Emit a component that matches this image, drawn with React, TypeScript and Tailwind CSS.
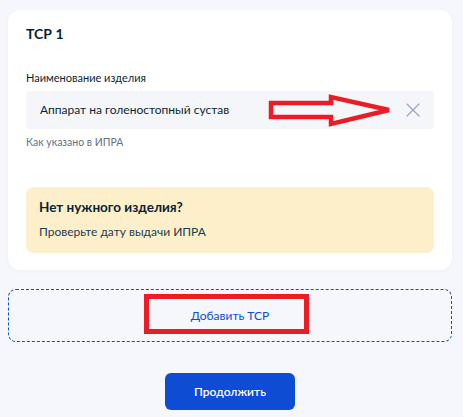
import React from "react";

const FONT = { fontFamily: "Lato, 'Noto Sans', sans-serif" };

function CloseIcon() {
  return (
    <svg width="14" height="14" viewBox="0 0 14 14" fill="none" stroke="#9aa6c6" strokeWidth={1.3} strokeLinecap="round">
      <path d="M1 1l12 12M13 1L1 13" />
    </svg>
  );
}

export default function App() {
  return (
    <div className="relative min-h-screen bg-[#f5f7fc] pl-2 pr-[11px] pt-[10px] pb-4 text-[#0b1f33]" style={FONT}>
      {/* card */}
      <div className="rounded-xl bg-white px-[18px] pt-[12px] pb-[17px] shadow-[0_1px_4px_rgba(11,31,51,0.04)]">
        <h2 className="text-sm leading-6 font-bold">ТСР 1</h2>

        <label className="mt-[22px] block text-[11px] leading-5 text-[#0b1f33]">Наименование изделия</label>
        <div className="mt-[3px] flex h-[38px] items-center justify-between rounded bg-[#f4f6fa] pl-[14px] pr-[14px]">
          <span className="text-xs leading-5">Аппарат на голеностопный сустав</span>
          <CloseIcon />
        </div>
        <p className="mt-[5px] text-[10.5px] leading-4 text-[#66727f]">Как указано в ИПРА</p>

        <div className="mt-[37px] rounded-lg bg-[#fdefc9] px-[13px] pt-[8px] pb-[11px]">
          <h3 className="text-[13.5px] leading-6 font-bold">Нет нужного изделия?</h3>
          <p className="mt-[3px] text-xs leading-5 text-[#1c3a52]">Проверьте дату выдачи ИПРА</p>
        </div>
      </div>

      {/* add */}
      <button className="mt-[19px] flex h-[53px] w-full items-center justify-center rounded-lg border border-dashed border-[#0d4cd3] text-xs text-[#0d4cd3]">
        Добавить ТСР
      </button>

      <div className="mt-[31px] flex justify-center">
        <button className="h-[37px] w-[130px] rounded-md bg-[#0d4cd3] text-xs font-semibold text-white">Продолжить</button>
      </div>

      {/* annotations */}
      <svg className="pointer-events-none absolute left-0 top-0" width="463" height="417" fill="none" stroke="#ed1c24">
        <polygon
          points="271,103 331,103 331,97 389,110 331,124 331,117 271,117"
          strokeWidth={4.5}
          strokeLinejoin="miter"
        />
        <rect x="146.5" y="296.5" width="160" height="35" strokeWidth={5} />
      </svg>
    </div>
  );
}
